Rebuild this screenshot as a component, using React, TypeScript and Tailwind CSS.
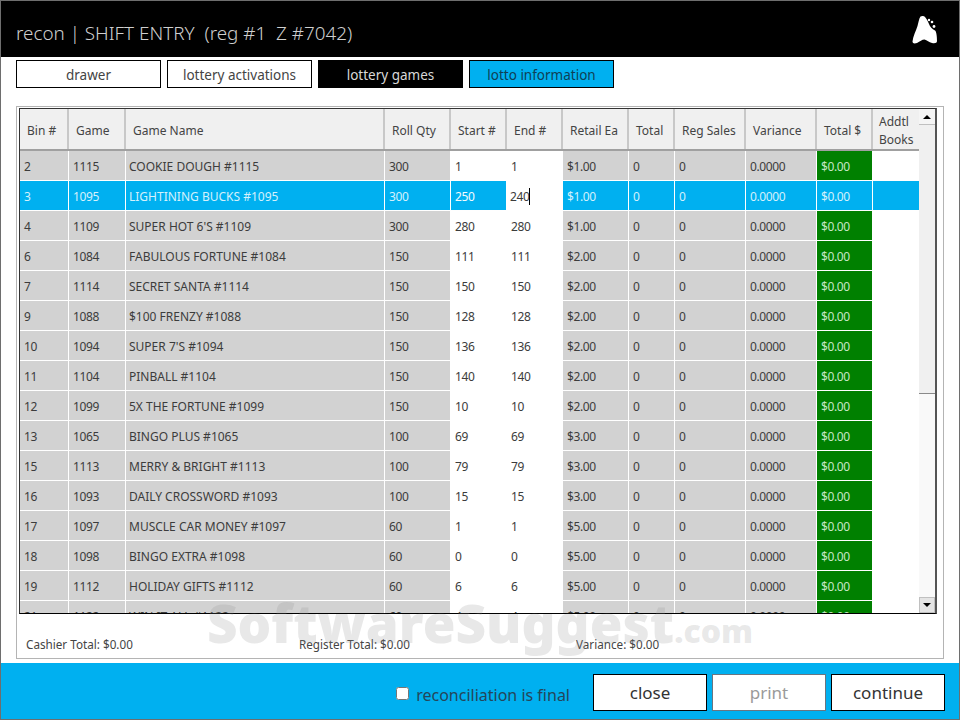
const font = { fontFamily: '"Noto Sans", sans-serif' };

const columns = [
  { label: "Bin #", width: "w-[49px]" },
  { label: "Game", width: "w-[57px]" },
  { label: "Game Name", width: "w-[259px]" },
  { label: "Roll Qty", width: "w-[66px]" },
  { label: "Start #", width: "w-[56px]" },
  { label: "End #", width: "w-[56px]" },
  { label: "Retail Ea", width: "w-[66px]" },
  { label: "Total", width: "w-[46px]" },
  { label: "Reg Sales", width: "w-[71px]" },
  { label: "Variance", width: "w-[71px]" },
  { label: "Total $", width: "w-[56px]" },
];

const games = [
  ["2", "1115", "COOKIE DOUGH #1115", "300", "1", "1", "$1.00"],
  ["3", "1095", "LIGHTINING BUCKS #1095", "300", "250", "240", "$1.00"],
  ["4", "1109", "SUPER HOT 6'S #1109", "300", "280", "280", "$1.00"],
  ["6", "1084", "FABULOUS FORTUNE #1084", "150", "111", "111", "$2.00"],
  ["7", "1114", "SECRET SANTA #1114", "150", "150", "150", "$2.00"],
  ["9", "1088", "$100 FRENZY #1088", "150", "128", "128", "$2.00"],
  ["10", "1094", "SUPER 7'S #1094", "150", "136", "136", "$2.00"],
  ["11", "1104", "PINBALL #1104", "150", "140", "140", "$2.00"],
  ["12", "1099", "5X THE FORTUNE #1099", "150", "10", "10", "$2.00"],
  ["13", "1065", "BINGO PLUS #1065", "100", "69", "69", "$3.00"],
  ["15", "1113", "MERRY & BRIGHT #1113", "100", "79", "79", "$3.00"],
  ["16", "1093", "DAILY CROSSWORD #1093", "100", "15", "15", "$3.00"],
  ["17", "1097", "MUSCLE CAR MONEY #1097", "60", "1", "1", "$5.00"],
  ["18", "1098", "BINGO EXTRA #1098", "60", "0", "0", "$5.00"],
  ["19", "1112", "HOLIDAY GIFTS #1112", "60", "6", "6", "$5.00"],
  ["21", "1122", "WIN IT ALL #1122", "60", "4", "4", "$5.00"],
];

function Cell({ width, tone, children }: { width: string; tone: string; children?: React.ReactNode }) {
  return (
    <div className={`${width} mr-px h-[29px] shrink-0 truncate pl-[4px] text-[12px] leading-[31px] tracking-[-0.4px] ${tone}`}>
      {children}
    </div>
  );
}

function GameRow({ row, selected }: { row: string[]; selected: boolean }) {
  const gray = selected ? "bg-[#00b0f0] text-[#d5f1fc]" : "bg-[#d2d2d2] text-[#3c3c3c]";
  const entry = selected ? "bg-[#00b0f0] text-[#f4fbfe]" : "bg-white text-[#3c3c3c]";
  const total = selected ? "bg-[#00b0f0] text-[#d5f1fc]" : "bg-[#008000] text-[#c5e6c5]";

  return (
    <div className="mb-px flex">
      <Cell width="w-[48px]" tone={gray}>{row[0]}</Cell>
      <Cell width="w-[56px]" tone={gray}>{row[1]}</Cell>
      <div className={`mr-px h-[29px] w-[258px] shrink-0 truncate pl-[3px] text-[12px] leading-[31px] ${gray}`}>{row[2]}</div>
      <Cell width="w-[65px]" tone={gray}>{row[3]}</Cell>
      <Cell width="w-[55px]" tone={entry}>{row[4]}</Cell>
      {selected ? (
        <div className="mr-px flex h-[29px] w-[55px] shrink-0 items-center bg-white pl-[3px] pt-[2px] text-[12px] tracking-[-0.4px] text-[#3c3c3c]">
          {row[5]}
          <span className="h-[17px] w-px bg-black" />
        </div>
      ) : (
        <Cell width="w-[55px]" tone="bg-white text-[#3c3c3c]">{row[5]}</Cell>
      )}
      <Cell width="w-[65px]" tone={gray}>{row[6]}</Cell>
      <Cell width="w-[45px]" tone={gray}>0</Cell>
      <Cell width="w-[70px]" tone={gray}>0</Cell>
      <Cell width="w-[70px]" tone={gray}>0.0000</Cell>
      <Cell width="w-[55px]" tone={total}>$0.00</Cell>
      <Cell width="w-[46px]" tone={selected ? "bg-[#00b0f0]" : "bg-white"} />
    </div>
  );
}

function Logo() {
  return (
    <svg width="26" height="30" viewBox="0 0 26 30" className="mr-[21px] mt-[2px]">
      <path
        d="M8.5 1.5 C10 0.5 12 1 13 2 C15 4 16 7 17 9 C18 12 20 14 23 15.5 C24.5 16.5 25 22 25 26 C25 28 23 28.5 20 28 C17 27.5 15 25 12.5 24.5 C10 24.5 8 26.5 5 28 C2.5 29 0.5 28.5 0.5 26.5 C1 21 4 16 5.5 11 C6.5 7.5 7 3.5 8.5 1.5 Z"
        fill="#ffffff"
      />
      <circle cx="17" cy="5" r="1.2" fill="#ffffff" />
      <circle cx="20" cy="7" r="1.3" fill="#ffffff" />
      <circle cx="22" cy="11.5" r="1.4" fill="#ffffff" />
    </svg>
  );
}

function Tab({ label, tone }: { label: string; tone: string }) {
  return (
    <button className={`h-[28px] w-[145px] border border-black pt-[2px] text-[13.5px] ${tone}`}>{label}</button>
  );
}

function FooterButton({ label, muted }: { label: string; muted?: boolean }) {
  return (
    <button
      className={`h-[37px] w-[114px] border bg-white text-[17px] ${
        muted ? "border-[#6a7580] text-[#9a9a9a]" : "border-black text-[#333333]"
      }`}
    >
      {label}
    </button>
  );
}

export default function App() {
  return (
    <div style={font} className="relative flex h-[720px] w-[960px] flex-col overflow-hidden border border-[#6e6e6e] bg-white">
      <div className="flex h-[56px] shrink-0 items-center justify-between bg-black">
        <div className="pl-[15px] pt-[9px] text-[18.85px] font-light whitespace-pre text-[#cfcfcf]">
          recon | SHIFT ENTRY  (reg #1  Z #7042)
        </div>
        <Logo />
      </div>

      <div className="mt-[3px] flex gap-[6px] pl-[15px]">
        <Tab label="drawer" tone="bg-white text-[#444444]" />
        <Tab label="lottery activations" tone="bg-white text-[#444444]" />
        <Tab label="lottery games" tone="bg-black text-[#d8d8d8]" />
        <Tab label="lotto information" tone="bg-[#00b0f0] text-[#0f3f55]" />
      </div>

      <div className="ml-[15px] mt-[18px] flex h-[553px] w-[928px] flex-col border border-[#b4b4b4] pl-[2px] pt-px">
        <div className="h-[506px] w-[918px] overflow-hidden border-y border-r-2 border-l border-[#333333] border-r-[#555555] border-b-black">
          <div className="flex h-full">
            <div className="w-[899px] shrink-0">
              <div className="flex h-[42px] border-b-2 border-[#a0a0a0] bg-[#f0f0f0] text-[12px] text-[#444444]">
                {columns.map((col) => (
                  <div key={col.label} className={`${col.width} flex shrink-0 items-center border-r-2 border-[#c8c8c8] pl-[7px] pt-[4px]`}>
                    {col.label}
                  </div>
                ))}
                <div className="w-[46px] pl-[6px] pt-[4px] text-[12px] leading-[18px] text-[#444444]">
                  Addtl
                  <br />
                  Books
                </div>
              </div>
              {games.map((row) => (
                <GameRow key={row[0]} row={row} selected={row[0] === "3"} />
              ))}
            </div>
            <div className="flex w-[16px] shrink-0 flex-col bg-[#f9f9f9]">
              <div className="flex h-[16px] shrink-0 items-center justify-center border-b border-[#c0c0c0] bg-[#f5f5f5]">
                <span className="h-0 w-0 border-x-[4px] border-b-[4px] border-x-transparent border-b-black" />
              </div>
              <div className="h-[269px] shrink-0 border-b border-[#8a8a8a] bg-[#f0f0f0]" />
              <div className="flex-1" />
              <div className="flex h-[16px] shrink-0 items-center justify-center border border-[#c0c0c0] bg-[#e4e4e4]">
                <span className="h-0 w-0 border-x-[4px] border-t-[4px] border-x-transparent border-t-black" />
              </div>
            </div>
          </div>
        </div>
        <div className="relative mt-[22px] h-[16px] text-[11.7px] leading-[16px] text-[#444444]">
          <div className="flex">
            <span className="ml-[7px] w-[273px]">Cashier Total: $0.00</span>
            <span className="w-[277px]">Register Total: $0.00</span>
            <span>Variance: $0.00</span>
          </div>
        </div>
      </div>

      <div className="mt-[4px] flex h-[56px] shrink-0 items-center justify-end bg-[#00b0f0] pr-[14px] pt-[3px]">
        <input type="checkbox" readOnly className="mr-[7px] mt-[1px] h-[13px] w-[13px]" />
        <span className="mr-[23px] pt-[5px] text-[16px] text-[#24465a]">reconciliation is final</span>
        <div className="flex gap-[5px]">
          <FooterButton label="close" />
          <FooterButton label="print" muted />
          <FooterButton label="continue" />
        </div>
      </div>

      <div className="pointer-events-none absolute left-[206px] top-[592px] flex items-baseline font-black text-[#8c8c8c]/20">
        <span className="text-[53px] leading-[60px]">SoftwareSuggest</span>
        <span className="text-[32px] leading-[60px]">.com</span>
      </div>
    </div>
  );
}
